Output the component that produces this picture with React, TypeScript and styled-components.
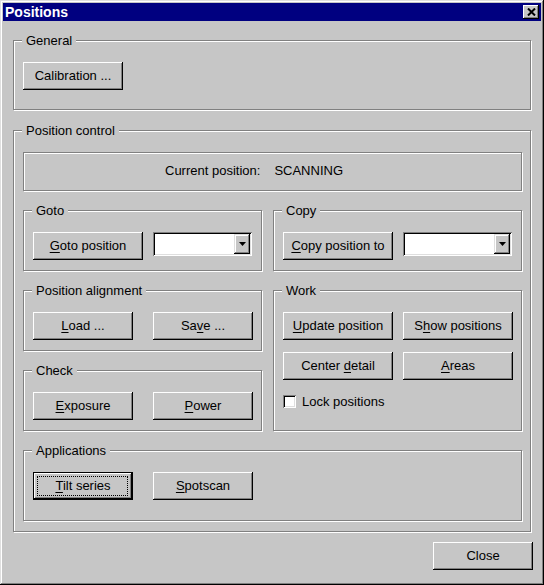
import React from "react";
import styled, { createGlobalStyle } from "styled-components";

const face = "#c6c6c6";

const GlobalStyle = createGlobalStyle`
  body {
    margin: 0;
    background: ${face};
    font-family: "Liberation Sans", Arial, sans-serif;
  }
`;

const Window = styled.div`
  width: 544px;
  height: 585px;
  box-sizing: border-box;
  padding: 3px;
  background: ${face};
  display: flex;
  flex-direction: column;
  box-shadow: inset -1px -1px #000, inset 1px 1px #dfdfdf,
    inset -2px -2px #808080, inset 2px 2px #fff;
  font-family: "Liberation Sans", Arial, sans-serif;
  font-size: 13px;
  color: #000;
`;

const TitleBar = styled.div`
  height: 18px;
  flex-shrink: 0;
  background: #000080;
  color: #fff;
  display: flex;
  align-items: center;
  justify-content: space-between;
  padding: 0 2px;
  font-weight: bold;
  font-size: 14px;
`;

const TitleClose = styled.div`
  width: 16px;
  height: 14px;
  background: ${face};
  display: flex;
  align-items: center;
  justify-content: center;
  box-shadow: inset -1px -1px #000, inset 1px 1px #fff, inset -2px -2px #808080;
`;

const Body = styled.div`
  flex: 1;
  display: flex;
  flex-direction: column;
  padding: 19px 10px 0 10px;
`;

const Group = styled.div<{ $pb?: number; $h?: number; $area?: string }>`
  position: relative;
  box-sizing: border-box;
  border: 1px solid #808080;
  box-shadow: inset 1px 1px #fff, 1px 1px #fff;
  padding: 21px 9px ${(p) => p.$pb ?? 0}px 9px;
  ${(p) => (p.$h ? `height: ${p.$h}px;` : "")}
  ${(p) => (p.$area ? `grid-area: ${p.$area};` : "")}
`;

const GroupLabel = styled.span`
  position: absolute;
  top: -8px;
  left: 8px;
  line-height: 15px;
  padding: 0 4px;
  background: ${face};
  white-space: nowrap;
`;

const PositionControl = styled(Group)`
  margin-top: 20px;
  padding: 21px 8px 10px 9px;
  display: flex;
  flex-direction: column;
  gap: 19px;
`;

const CurrentBox = styled.div`
  height: 39px;
  box-sizing: border-box;
  border: 1px solid #808080;
  box-shadow: inset 1px 1px #fff, 1px 1px #fff;
  display: flex;
  align-items: center;
  padding-left: 141px;
  padding-bottom: 2px;
`;

const CurrentValue = styled.span`
  margin-left: 14px;
`;

const Panels = styled.div`
  display: grid;
  grid-template-columns: 239px 249px;
  grid-template-rows: 61px 61px 61px;
  column-gap: 11px;
  row-gap: 19px;
  grid-template-areas:
    "goto copy"
    "align work"
    "check work";
`;

const Row = styled.div<{ $gap?: number; $mt?: number }>`
  display: flex;
  align-items: flex-start;
  gap: ${(p) => p.$gap ?? 10}px;
  margin-top: ${(p) => p.$mt ?? 0}px;
`;

const Button = styled.button<{ $w: number; $default?: boolean }>`
  position: relative;
  width: ${(p) => p.$w}px;
  height: 28px;
  padding: 0 0 2px 0;
  box-sizing: border-box;
  flex-shrink: 0;
  background: ${face};
  color: #000;
  font-family: "Liberation Sans", Arial, sans-serif;
  font-size: 13px;
  border: ${(p) => (p.$default ? "1px solid #000" : "none")};
  box-shadow: inset -1px -1px #000, inset 1px 1px #fff, inset -2px -2px #808080;
  cursor: default;
  u {
    text-decoration: underline;
    text-underline-offset: 2px;
  }
  ${(p) =>
    p.$default
      ? `&::after {
          content: "";
          position: absolute;
          inset: 3px 4px 3px 3px;
          border: 1px dotted #000;
        }`
      : ""}
`;

const Combo = styled.div<{ $w: number }>`
  width: ${(p) => p.$w}px;
  height: 24px;
  box-sizing: border-box;
  padding: 2px;
  background: #fff;
  display: flex;
  justify-content: flex-end;
  box-shadow: inset 1px 1px #808080, inset -1px -1px #fff, inset 2px 2px #000,
    inset -2px -2px #dfdfdf;
`;

const DropButton = styled.div`
  width: 16px;
  height: 20px;
  background: ${face};
  display: flex;
  align-items: center;
  justify-content: center;
  box-shadow: inset -1px -1px #000, inset 1px 1px #dfdfdf,
    inset -2px -2px #808080, inset 2px 2px #fff;
`;

const CheckRow = styled.label`
  display: flex;
  align-items: center;
  gap: 6px;
  margin-top: 15px;
  height: 13px;
`;

const CheckBox = styled.span`
  width: 13px;
  height: 13px;
  box-sizing: border-box;
  background: #fff;
  box-shadow: inset 1px 1px #808080, inset -1px -1px #fff, inset 2px 2px #000,
    inset -2px -2px #dfdfdf;
`;

const Footer = styled.div`
  display: flex;
  justify-content: flex-end;
  margin-top: 10px;
  margin-right: -2px;
`;

function ComboBox({ width }: { width: number }) {
  return (
    <Combo $w={width}>
      <DropButton>
        <svg width="7" height="4" viewBox="0 0 7 4">
          <path d="M0 0h7L3.5 4z" fill="#000" />
        </svg>
      </DropButton>
    </Combo>
  );
}

export default function App() {
  return (
    <>
      <GlobalStyle />
      <Window>
        <TitleBar>
          <span>Positions</span>
          <TitleClose>
            <svg width="9" height="8" viewBox="0 0 9 8">
              <path d="M1 0.5L8 7.5M8 0.5L1 7.5" stroke="#000" strokeWidth="2" />
            </svg>
          </TitleClose>
        </TitleBar>
        <Body>
          <Group $h={70}>
            <GroupLabel>General</GroupLabel>
            <Button $w={100}>Calibration ...</Button>
          </Group>

          <PositionControl>
            <GroupLabel>Position control</GroupLabel>
            <CurrentBox>
              <span>Current position:</span>
              <CurrentValue>SCANNING</CurrentValue>
            </CurrentBox>

            <Panels>
              <Group $area="goto">
                <GroupLabel>Goto</GroupLabel>
                <Row>
                  <Button $w={110}>
                    <u>G</u>oto position
                  </Button>
                  <ComboBox width={100} />
                </Row>
              </Group>
              <Group $area="copy">
                <GroupLabel>Copy</GroupLabel>
                <Row>
                  <Button $w={110}>
                    <u>C</u>opy position to
                  </Button>
                  <ComboBox width={110} />
                </Row>
              </Group>
              <Group $area="align">
                <GroupLabel>Position alignment</GroupLabel>
                <Row $gap={20}>
                  <Button $w={100}>
                    <u>L</u>oad ...
                  </Button>
                  <Button $w={100}>
                    Sa<u>v</u>e ...
                  </Button>
                </Row>
              </Group>
              <Group $area="check">
                <GroupLabel>Check</GroupLabel>
                <Row $gap={20}>
                  <Button $w={100}>
                    <u>E</u>xposure
                  </Button>
                  <Button $w={100}>
                    <u>P</u>ower
                  </Button>
                </Row>
              </Group>
              <Group $area="work">
                <GroupLabel>Work</GroupLabel>
                <Row>
                  <Button $w={110}>
                    <u>U</u>pdate position
                  </Button>
                  <Button $w={110}>
                    S<u>h</u>ow positions
                  </Button>
                </Row>
                <Row $mt={12}>
                  <Button $w={110}>
                    Center <u>d</u>etail
                  </Button>
                  <Button $w={110}>
                    <u>A</u>reas
                  </Button>
                </Row>
                <CheckRow>
                  <CheckBox />
                  <span>Lock positions</span>
                </CheckRow>
              </Group>
            </Panels>

            <Group $h={71}>
              <GroupLabel>Applications</GroupLabel>
              <Row $gap={20}>
                <Button $w={100} $default>
                  <u>T</u>ilt series
                </Button>
                <Button $w={100}>
                  <u>S</u>potscan
                </Button>
              </Row>
            </Group>
          </PositionControl>

          <Footer>
            <Button $w={100}>Close</Button>
          </Footer>
        </Body>
      </Window>
    </>
  );
}
